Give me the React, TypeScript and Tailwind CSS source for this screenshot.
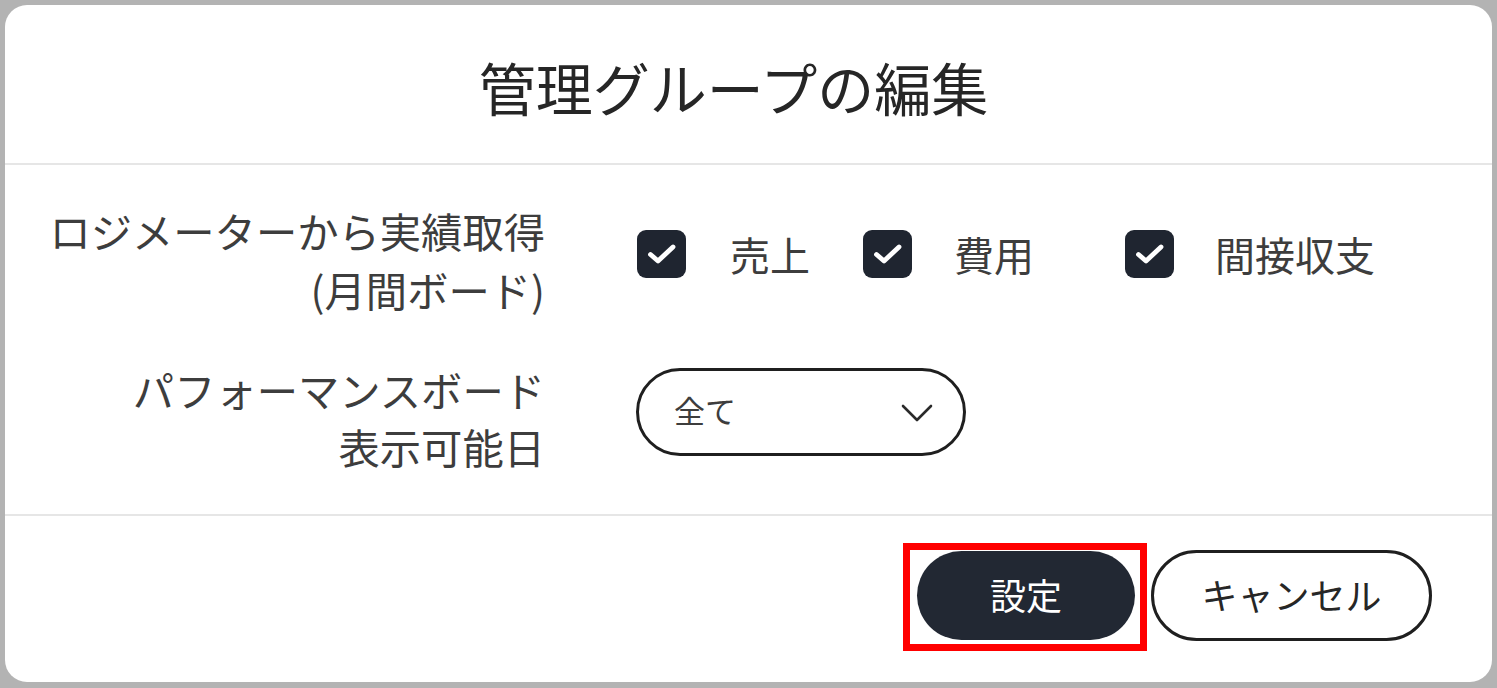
import React from "react";

const font = { fontFamily: '"Noto Sans CJK JP", "Noto Sans", sans-serif' };

function Check({ label, className, gap }: { label: string; className?: string; gap: string }) {
  return (
    <div className={"flex items-center " + (className ?? "")}>
      <div className="w-[49px] h-[48px] rounded-[9px] bg-[#1f2530] flex items-center justify-center">
        <svg width="32" height="26" viewBox="0 0 32 26" fill="none">
          <path d="M4.5 13.5 L12 20 L27 6" stroke="white" strokeWidth="4.8" strokeLinecap="round" strokeLinejoin="round" />
        </svg>
      </div>
      <span className={gap + " text-[40px] leading-[48px] text-[#3d3d3d]"}>{label}</span>
    </div>
  );
}

export default function App() {
  return (
    <div className="w-[1497px] h-[688px] bg-[#b3b3b3] pt-[5px] pl-[5px] pr-[5px] pb-[6px]" style={font}>
      <div className="bg-white rounded-[22px] h-full flex flex-col overflow-hidden">
        <div className="h-[160px] flex items-center justify-center border-b-2 border-[#e6e6e6] shrink-0">
          <h1 className="text-[57px] leading-[64px] text-[#262626] font-normal mt-[4px] mr-[30px]">管理グループの編集</h1>
        </div>
        <div className="flex-1 flex flex-col pt-[36px] border-b-2 border-[#e6e6e6]">
          <div className="flex items-start">
            <div className="w-[540px] text-right text-[41.3px] leading-[59px] text-[#3d3d3d]">
              <div>ロジメーターから実績取得</div>
              <div>(月間ボード)</div>
            </div>
            <div className="ml-[92px] mt-[29px] flex items-center">
              <Check label="売上" gap="ml-[44px]" />
              <Check label="費用" gap="ml-[42px]" className="ml-[53px]" />
              <Check label="間接収支" gap="ml-[41px]" className="ml-[91px]" />
            </div>
          </div>
          <div className="flex items-start mt-[42px]">
            <div className="w-[540px] text-right text-[41.3px] leading-[57px] text-[#3d3d3d]">
              <div>パフォーマンスボード</div>
              <div>表示可能日</div>
            </div>
            <div className="ml-[91px] mt-[7px] w-[330px] h-[88px] rounded-full border-[3px] border-[#1f1f1f] flex items-center pl-[35px] pr-[30px]">
              <span className="text-[31px] leading-[40px] text-[#3d3d3d] flex-1 -mt-[4px]">全て</span>
              <svg width="32" height="22" viewBox="0 0 32 22" fill="none">
                <path d="M2 5 L16 19 L30 5" stroke="#2a2a2a" strokeWidth="2.6" strokeLinecap="round" strokeLinejoin="round" />
              </svg>
            </div>
          </div>
        </div>
        <div className="h-[166px] shrink-0 flex items-center justify-end pr-[60px] pb-[7px]">
          <div className="relative">
            <button className="w-[218px] h-[89px] rounded-full bg-[#222833] text-white text-[36px] leading-[44px] flex items-center justify-center pb-[3px]">
              設定
            </button>
            <div className="absolute top-[-8px] left-[-14px] right-[-12px] bottom-[-11px] border-[7px] border-[#ff0000] pointer-events-none" />
          </div>
          <button className="ml-[16px] w-[281px] h-[91px] rounded-full border-[3px] border-[#1f1f1f] bg-white text-[36px] leading-[44px] text-[#262626] flex items-center justify-center pb-[3px]">
            キャンセル
          </button>
        </div>
      </div>
    </div>
  );
}
